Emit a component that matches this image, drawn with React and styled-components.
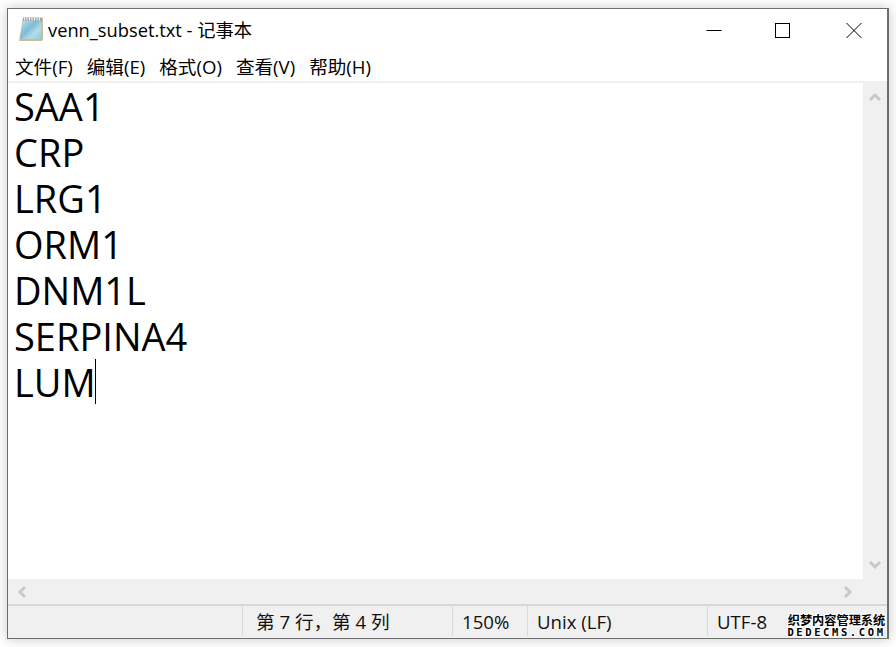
import React from 'react';
import styled, { createGlobalStyle } from 'styled-components';

const GlobalStyle = createGlobalStyle`
  html, body {
    margin: 0;
    padding: 0;
    background: #fff;
    font-family: "Open Sans", "Noto Sans CJK SC", sans-serif;
  }
`;

const Page = styled.div`
  width: 896px;
  height: 647px;
  padding: 8px 7px;
  box-sizing: border-box;
  overflow: hidden;
`;

const Window = styled.div`
  position: relative;
  width: 882px;
  height: 631px;
  box-sizing: border-box;
  border: 1px solid #6e6e6e;
  border-right-width: 2px;
  background: #fff;
  box-shadow: 0 0 12px rgba(0, 0, 0, 0.22);
  display: flex;
  flex-direction: column;
`;

const TitleBar = styled.div`
  height: 39px;
  flex: none;
  display: flex;
  align-items: center;
  padding-left: 11px;
`;

const Title = styled.span`
  margin-left: 5px;
  font-size: 18.3px;
  color: #000;
  white-space: nowrap;
`;

const WindowButtons = styled.div`
  margin-left: auto;
  margin-right: -2px;
  display: flex;
  height: 100%;
`;

const WindowButton = styled.div`
  width: 70px;
  box-sizing: border-box;
  padding-top: 3px;
  display: flex;
  align-items: center;
  justify-content: center;
`;

const MenuBar = styled.div`
  height: 35px;
  flex: none;
  box-sizing: border-box;
  display: flex;
  align-items: center;
  padding: 1px 0 0 7px;
  gap: 14px;
  border-bottom: 2px solid #f0f0f0;
`;

const MenuItem = styled.span`
  font-size: 18.6px;
  color: #000;
  white-space: nowrap;
`;

const Middle = styled.div`
  flex: 1;
  display: flex;
  min-height: 0;
`;

const Editor = styled.div`
  flex: 1;
  padding: 0 0 0 6px;
  font-size: 38px;
  line-height: 46px;
  color: #000;
`;

const Line = styled.div`
  white-space: pre;
`;

const Caret = styled.span`
  display: inline-block;
  width: 1px;
  height: 45px;
  margin-left: -1px;
  background: #000;
  vertical-align: top;
`;

const VScroll = styled.div`
  width: 24px;
  flex: none;
  background: #f0f0f0;
  display: flex;
  flex-direction: column;
  justify-content: space-between;
  align-items: center;
  padding: 8px 0;
  box-sizing: border-box;
`;

const HScroll = styled.div`
  height: 25px;
  flex: none;
  background: #f0f0f0;
  display: flex;
  align-items: center;
  justify-content: space-between;
  padding: 0 33px 0 8px;
`;

const StatusBar = styled.div`
  height: 34px;
  flex: none;
  box-sizing: border-box;
  background: #f0f0f0;
  border-top: 2px solid #d8d8d8;
  display: flex;
  padding-bottom: 2px;
`;

const StatusCell = styled.div`
  width: ${(p) => p.$width}px;
  flex: none;
  box-sizing: border-box;
  border-left: ${(p) => (p.$first ? 'none' : '1px solid #d8d8d8')};
  padding-left: ${(p) => p.$pad || 9}px;
  font-size: 18.6px;
  line-height: 32px;
  color: #111;
  white-space: nowrap;
`;

const Watermark = styled.div`
  position: absolute;
  right: 0;
  bottom: 0;
  width: 101px;
  height: 27px;
  box-sizing: border-box;
  padding-top: 2px;
  color: #000;
  text-align: center;
  font-family: "Noto Sans CJK SC", sans-serif;
  font-weight: 700;
  text-shadow: 1px 0 #fff, -1px 0 #fff, 0 1px #fff, 0 -1px #fff, 1px 1px #fff, -1px -1px #fff, 1px -1px #fff, -1px 1px #fff;
`;

const WatermarkTop = styled.div`
  font-size: 12.2px;
  line-height: 14px;
  white-space: nowrap;
`;

const WatermarkBottom = styled.div`
  font-family: "DejaVu Sans Mono", monospace;
  font-size: 10.5px;
  line-height: 11px;
  letter-spacing: 2.6px;
  white-space: nowrap;
`;

const NotepadIcon = () => (
  <svg width="24" height="24" viewBox="0 0 24 24">
    <defs>
      <linearGradient id="pad" x1="0" y1="0" x2="1" y2="1">
        <stop offset="0" stopColor="#c4e6f0" />
        <stop offset="0.45" stopColor="#7dbdd4" />
        <stop offset="0.7" stopColor="#b4dce9" />
        <stop offset="1" stopColor="#8cc6da" />
      </linearGradient>
    </defs>
    <path d="M4 1h20v21l-1 2H0z" fill="#cdbb96" />
    <path d="M4 2h18.5v20H1z" fill="url(#pad)" />
    <path d="M4 0.5h19V4H3.6z" fill="#9fadb2" />
    <path d="M5.5 1v2.5M8 1v2.5M10.5 1v2.5M13 1v2.5M15.5 1v2.5M18 1v2.5M20.5 1v2.5" stroke="#f6f6f6" strokeWidth="1" />
  </svg>
);

const Chevron = ({ d }) => (
  <svg width="12" height="12" viewBox="0 0 12 12">
    <path d={d} fill="none" stroke="#c8c8c8" strokeWidth="3" />
  </svg>
);

const menus = ['文件(F)', '编辑(E)', '格式(O)', '查看(V)', '帮助(H)'];
const lines = ['SAA1', 'CRP', 'LRG1', 'ORM1', 'DNM1L', 'SERPINA4'];

const App = () => {
  return (
    <Page>
      <GlobalStyle />
      <Window>
        <TitleBar>
          <NotepadIcon />
          <Title>venn_subset.txt - 记事本</Title>
          <WindowButtons>
            <WindowButton>
              <svg width="16" height="16" viewBox="0 0 16 16">
                <path d="M0.5 8.5h15" stroke="#000" />
              </svg>
            </WindowButton>
            <WindowButton>
              <svg width="18" height="18" viewBox="0 0 18 18">
                <rect x="0.5" y="2.5" width="14" height="14" fill="none" stroke="#000" />
              </svg>
            </WindowButton>
            <WindowButton>
              <svg width="16" height="16" viewBox="0 0 16 16">
                <path d="M0.5 1l15 15M15.5 1l-15 15" stroke="#000" />
              </svg>
            </WindowButton>
          </WindowButtons>
        </TitleBar>
        <MenuBar>
          {menus.map((m) => (
            <MenuItem key={m}>{m}</MenuItem>
          ))}
        </MenuBar>
        <Middle>
          <Editor>
            {lines.map((l) => (
              <Line key={l}>{l}</Line>
            ))}
            <Line>
              LUM
              <Caret />
            </Line>
          </Editor>
          <VScroll>
            <Chevron d="M1 9l5-5 5 5" />
            <Chevron d="M1 3l5 5 5-5" />
          </VScroll>
        </Middle>
        <HScroll>
          <Chevron d="M9 1L4 6l5 5" />
          <Chevron d="M3 1l5 5-5 5" />
        </HScroll>
        <StatusBar>
          <StatusCell $first $width={234} />
          <StatusCell $width={210} $pad={13}>第 7 行，第 4 列</StatusCell>
          <StatusCell $width={75}>150%</StatusCell>
          <StatusCell $width={180}>Unix (LF)</StatusCell>
          <StatusCell $width={170}>UTF-8</StatusCell>
        </StatusBar>
        <Watermark>
          <WatermarkTop>织梦内容管理系统</WatermarkTop>
          <WatermarkBottom>DEDECMS.COM</WatermarkBottom>
        </Watermark>
      </Window>
    </Page>
  );
};

export default App;
